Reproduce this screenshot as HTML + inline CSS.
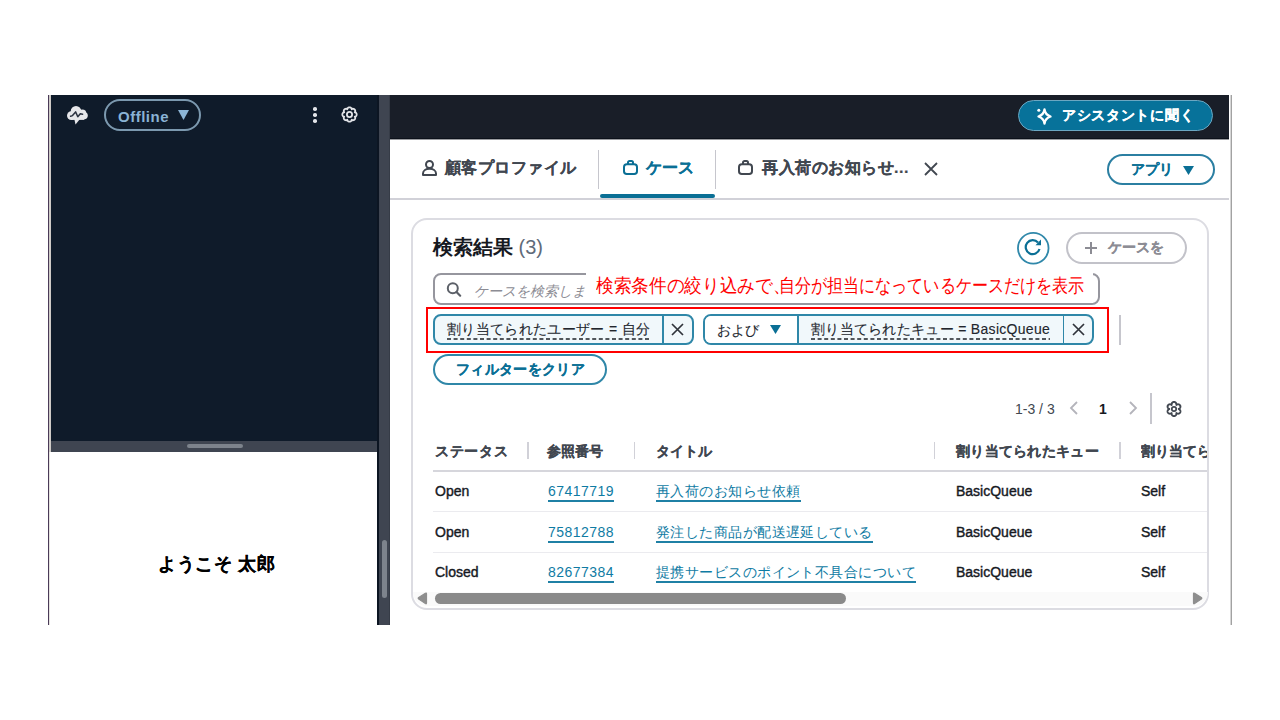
<!DOCTYPE html>
<html><head><meta charset="utf-8">
<style>
*{box-sizing:border-box;margin:0;padding:0}
html,body{width:1280px;height:720px;overflow:hidden;background:#fff}
body{position:relative;font-family:"Liberation Sans",sans-serif;color:#414750}
.a{position:absolute}
.t{position:absolute;white-space:nowrap;line-height:1}
svg{position:absolute;overflow:visible}
.lk{font-size:14px;color:#0f7ba3;border-bottom:2px solid #1f80a5;padding-bottom:1.5px;letter-spacing:0.45px}
</style></head><body>

<!-- left edge lines -->
<div class="a" style="left:48px;top:95px;width:1px;height:530px;background:#4a3b58"></div>
<div class="a" style="left:49px;top:95px;width:2px;height:357px;background:#cfcbc7"></div><div class="a" style="left:49px;top:452px;width:1px;height:173px;background:#e6e3e0"></div>

<!-- left CCP panel -->
<div class="a" style="left:51px;top:95px;width:327px;height:346px;background:#0f1b2a"></div>
<div class="a" style="left:51px;top:441px;width:327px;height:11px;background:#3f4551"></div>
<div class="a" style="left:187px;top:444px;width:56px;height:4px;border-radius:2px;background:#7d838c"></div>

<!-- cloud icon -->
<svg style="left:62px;top:102px" width="30" height="26" viewBox="0 0 30 26">
  <g fill="#e6e7ea">
  <circle cx="9.3" cy="13.6" r="4.3"/>
  <circle cx="14" cy="9.3" r="5.3"/>
  <circle cx="20.3" cy="11.4" r="4"/>
  <circle cx="22.2" cy="13.6" r="3.6"/>
  <rect x="9.3" y="11" width="13" height="6.9"/>
  <path d="M12.3 17 L18 17 L13.5 22.6 Z"/>
  </g>
  <path d="M8.6 14.2 L10.5 13.6 L13.6 9.9 L15.8 14.8 L18.3 11.8 L20.6 12.2" fill="none" stroke="#2a3240" stroke-width="1.5" stroke-linejoin="round" stroke-linecap="round"/>
</svg>

<!-- Offline button -->
<div class="a" style="left:104px;top:99px;width:97px;height:32px;border:2px solid #7c99af;border-radius:16px"></div>
<div class="t" style="left:118px;top:109px;font-size:15px;font-weight:bold;color:#8ab3d5;letter-spacing:0.5px">Offline</div>
<svg style="left:178px;top:110px" width="11" height="10" viewBox="0 0 11 10"><path d="M0 0 H11 L5.5 10 Z" fill="#8cb5d6"/></svg>

<!-- kebab + gear -->
<div class="a" style="left:313.2px;top:107.3px;width:3.6px;height:3.6px;border-radius:50%;background:#e3e5e9"></div>
<div class="a" style="left:313.2px;top:113.3px;width:3.6px;height:3.6px;border-radius:50%;background:#e3e5e9"></div>
<div class="a" style="left:313.2px;top:119.3px;width:3.6px;height:3.6px;border-radius:50%;background:#e3e5e9"></div>
<svg style="left:341px;top:106px" width="17" height="17" viewBox="0 0 17 17">
  <path d="M8.50 1.35 L8.73 1.36 L8.97 1.40 L9.19 1.45 L9.42 1.53 L9.63 1.63 L9.84 1.75 L10.04 1.90 L10.22 2.07 L10.39 2.27 L10.54 2.49 L10.66 2.77 L10.68 3.23 L11.03 2.92 L11.31 2.81 L11.57 2.75 L11.83 2.74 L12.08 2.75 L12.32 2.78 L12.56 2.84 L12.78 2.92 L12.99 3.02 L13.19 3.15 L13.38 3.29 L13.56 3.44 L13.71 3.62 L13.85 3.81 L13.98 4.01 L14.08 4.22 L14.16 4.44 L14.22 4.68 L14.25 4.92 L14.26 5.17 L14.25 5.43 L14.19 5.69 L14.08 5.97 L13.77 6.32 L14.23 6.34 L14.51 6.46 L14.73 6.61 L14.93 6.78 L15.10 6.96 L15.25 7.16 L15.37 7.37 L15.47 7.58 L15.55 7.81 L15.60 8.03 L15.64 8.27 L15.65 8.50 L15.64 8.73 L15.60 8.97 L15.55 9.19 L15.47 9.42 L15.37 9.63 L15.25 9.84 L15.10 10.04 L14.93 10.22 L14.73 10.39 L14.51 10.54 L14.23 10.66 L13.77 10.68 L14.08 11.03 L14.19 11.31 L14.25 11.57 L14.26 11.83 L14.25 12.08 L14.22 12.32 L14.16 12.56 L14.08 12.78 L13.98 12.99 L13.85 13.19 L13.71 13.38 L13.56 13.56 L13.38 13.71 L13.19 13.85 L12.99 13.98 L12.78 14.08 L12.56 14.16 L12.32 14.22 L12.08 14.25 L11.83 14.26 L11.57 14.25 L11.31 14.19 L11.03 14.08 L10.68 13.77 L10.66 14.23 L10.54 14.51 L10.39 14.73 L10.22 14.93 L10.04 15.10 L9.84 15.25 L9.63 15.37 L9.42 15.47 L9.19 15.55 L8.97 15.60 L8.73 15.64 L8.50 15.65 L8.27 15.64 L8.03 15.60 L7.81 15.55 L7.58 15.47 L7.37 15.37 L7.16 15.25 L6.96 15.10 L6.78 14.93 L6.61 14.73 L6.46 14.51 L6.34 14.23 L6.32 13.77 L5.97 14.08 L5.69 14.19 L5.43 14.25 L5.17 14.26 L4.92 14.25 L4.68 14.22 L4.44 14.16 L4.22 14.08 L4.01 13.98 L3.81 13.85 L3.62 13.71 L3.44 13.56 L3.29 13.38 L3.15 13.19 L3.02 12.99 L2.92 12.78 L2.84 12.56 L2.78 12.32 L2.75 12.08 L2.74 11.83 L2.75 11.57 L2.81 11.31 L2.92 11.03 L3.23 10.68 L2.77 10.66 L2.49 10.54 L2.27 10.39 L2.07 10.22 L1.90 10.04 L1.75 9.84 L1.63 9.63 L1.53 9.42 L1.45 9.19 L1.40 8.97 L1.36 8.73 L1.35 8.50 L1.36 8.27 L1.40 8.03 L1.45 7.81 L1.53 7.58 L1.63 7.37 L1.75 7.16 L1.90 6.96 L2.07 6.78 L2.27 6.61 L2.49 6.46 L2.77 6.34 L3.23 6.32 L2.92 5.97 L2.81 5.69 L2.75 5.43 L2.74 5.17 L2.75 4.92 L2.78 4.68 L2.84 4.44 L2.92 4.22 L3.02 4.01 L3.15 3.81 L3.29 3.62 L3.44 3.44 L3.62 3.29 L3.81 3.15 L4.01 3.02 L4.22 2.92 L4.44 2.84 L4.68 2.78 L4.92 2.75 L5.17 2.74 L5.43 2.75 L5.69 2.81 L5.97 2.92 L6.32 3.23 L6.34 2.77 L6.46 2.49 L6.61 2.27 L6.78 2.07 L6.96 1.90 L7.16 1.75 L7.37 1.63 L7.58 1.53 L7.81 1.45 L8.03 1.40 L8.27 1.36Z" fill="none" stroke="#e3e5e9" stroke-width="1.8" stroke-linejoin="round"/><circle cx="8.5" cy="8.5" r="2.6" fill="none" stroke="#e3e5e9" stroke-width="1.8"/>
</svg>

<!-- welcome -->
<div class="t" style="left:158px;top:555px;letter-spacing:0.6px;font-size:18px;font-weight:bold;color:#000;-webkit-text-stroke:0.2px #000">ようこそ 太郎</div>

<!-- gutter -->
<div class="a" style="left:377px;top:95px;width:2px;height:530px;background:#0c1522"></div><div class="a" style="left:379px;top:95px;width:11px;height:530px;background:#3f4551"></div><div class="a" style="left:389px;top:95px;width:1px;height:530px;background:#363c47"></div>
<div class="a" style="left:382px;top:540px;width:5px;height:58px;border-radius:3px;background:#7d838c"></div>

<!-- right header -->
<div class="a" style="left:390px;top:95px;width:839px;height:44px;background:#191e28;border-bottom:1px solid #0c111a"></div><div class="a" style="left:390px;top:139px;width:839px;height:1px;background:#9a9ca0"></div>
<div class="a" style="left:1230px;top:95px;width:1px;height:530px;background:#d6d6d6"></div><div class="a" style="left:1231px;top:95px;width:1px;height:530px;background:#a2a2a2"></div>

<!-- assistant button -->
<div class="a" style="left:1018px;top:100px;width:195px;height:31px;border-radius:16px;background:#07729a;border:1px solid #6ba7c2"></div>
<div class="t" style="left:1062px;top:108px;font-size:14px;font-weight:bold;color:#fff;letter-spacing:0.7px;-webkit-text-stroke:0.2px #fff">アシスタントに聞く</div>

<!-- tabs -->
<div class="t" style="left:445px;top:160px;font-size:16px;font-weight:bold;color:#414750;letter-spacing:0.45px;-webkit-text-stroke:0.2px #414750">顧客プロファイル</div>
<div class="a" style="left:598px;top:150px;width:1px;height:39px;background:#c6c6cd"></div>
<div class="t" style="left:646px;top:160px;font-size:16px;font-weight:bold;color:#0a6f95;-webkit-text-stroke:0.2px #0a6f95">ケース</div>
<div class="a" style="left:600px;top:194px;width:115px;height:4px;border-radius:2px;background:#0a6f95"></div>
<div class="a" style="left:715px;top:150px;width:1px;height:39px;background:#c6c6cd"></div>
<div class="t" style="left:762px;top:160px;font-size:16px;font-weight:bold;color:#414750;letter-spacing:0.5px;-webkit-text-stroke:0.2px #414750">再入荷のお知らせ...</div>
<div class="a" style="left:1107px;top:154px;width:108px;height:31px;border:2px solid #2b7fa2;border-radius:16px"></div>
<div class="t" style="left:1131px;top:162px;font-size:14px;font-weight:bold;color:#0a6f95;-webkit-text-stroke:0.2px #0a6f95">アプリ</div>
<svg style="left:1183px;top:166px" width="11" height="9" viewBox="0 0 11 9"><path d="M0 0 H11 L5.5 9 Z" fill="#0a6f95"/></svg>
<div class="a" style="left:390px;top:198px;width:839px;height:2px;background:#d1d1d8"></div>

<!-- card -->
<div class="a" style="left:410.5px;top:217.5px;width:798.5px;height:392px;border:2px solid #dcdce2;border-radius:16px"></div>
<div class="t" style="left:433px;top:237px;font-size:20px;font-weight:bold;color:#16191f;-webkit-text-stroke:0">検索結果 <span style="font-weight:normal;color:#5f6b7a;-webkit-text-stroke:0">(3)</span></div>


<!-- icons in tabs -->
<svg style="left:422px;top:160px" width="15" height="16" viewBox="0 0 15 16">
  <circle cx="7.5" cy="4.5" r="3.5" fill="none" stroke="#414750" stroke-width="2"/>
  <path d="M1 15 V13.5 C1 10.5 4 8.8 7.5 8.8 C11 8.8 14 10.5 14 13.5 V15 Z" fill="none" stroke="#414750" stroke-width="2" stroke-linejoin="round"/>
</svg>
<svg style="left:623px;top:160px" width="15" height="15" viewBox="0 0 15 15">
  <path d="M5 4 V2.5 C5 1.6 5.7 1 6.5 1 H8.5 C9.3 1 10 1.6 10 2.5 V4" fill="none" stroke="#0a6f95" stroke-width="2"/>
  <rect x="1" y="4.2" width="13" height="9.8" rx="2.8" fill="none" stroke="#0a6f95" stroke-width="2"/>
</svg>
<svg style="left:738px;top:160px" width="15" height="15" viewBox="0 0 15 15">
  <path d="M5 4 V2.5 C5 1.6 5.7 1 6.5 1 H8.5 C9.3 1 10 1.6 10 2.5 V4" fill="none" stroke="#414750" stroke-width="2"/>
  <rect x="1" y="4.2" width="13" height="9.8" rx="2.8" fill="none" stroke="#414750" stroke-width="2"/>
</svg>
<svg style="left:924px;top:162px" width="14" height="14" viewBox="0 0 14 14">
  <path d="M1 1 L13 13 M13 1 L1 13" stroke="#414750" stroke-width="1.8"/>
</svg>
<!-- sparkle -->
<svg style="left:1036px;top:108px" width="17" height="17" viewBox="0 0 17 17">
  <path d="M8.5 1.5 C9 5.5 10.5 7 14.5 8.5 C10.5 10 9 11.5 8.5 15.5 C8 11.5 6.5 10 2.5 8.5 C6.5 7 8 5.5 8.5 1.5 Z" fill="none" stroke="#fff" stroke-width="2.3" stroke-linejoin="round"/>
  <circle cx="2.8" cy="2.2" r="1.5" fill="#fff"/>
</svg>

<!-- refresh -->
<svg style="left:1017px;top:231.5px" width="33" height="33" viewBox="0 0 33 33"><circle cx="16.25" cy="16.25" r="15.3" fill="none" stroke="#3088aa" stroke-width="1.8"/></svg>
<svg style="left:1024px;top:238px" width="18" height="18" viewBox="0 0 18 18">
  <path d="M15.5 11 A7 7 0 1 1 14 4.5" fill="none" stroke="#0a6f95" stroke-width="2.2"/>
  <path d="M17 1.5 V7.2 H11.5 Z" fill="#0a6f95"/>
</svg>
<!-- + case -->
<div class="a" style="left:1066px;top:231.5px;width:121px;height:32.5px;border:2px solid #c2c2c9;border-radius:17px"></div>
<svg style="left:1085px;top:242px" width="12" height="12" viewBox="0 0 12 12"><path d="M6 0 V12 M0 6 H12" stroke="#8c8c94" stroke-width="2"/></svg>
<div class="t" style="left:1108px;top:240px;font-size:14px;font-weight:bold;color:#8c8c94;-webkit-text-stroke:0.2px #8c8c94">ケースを</div>

<!-- search input -->
<div class="a" style="left:433px;top:273px;width:667px;height:32px;border:2px solid #96969e;border-radius:8px"></div>
<svg style="left:446px;top:282px" width="16" height="16" viewBox="0 0 16 16">
  <circle cx="6.8" cy="6.3" r="5" fill="none" stroke="#5c6068" stroke-width="2"/>
  <path d="M10.5 10 L14.2 13.7" stroke="#5c6068" stroke-width="2.2" stroke-linecap="round"/>
</svg>
<div class="t" style="left:474px;top:284px;font-size:14px;font-style:italic;color:#8c8c94">ケースを検索しま</div>
<!-- annotation -->
<div class="a" style="left:586px;top:272px;width:507px;height:31px;background:#fff"></div>
<div class="t" style="left:596px;top:276.5px;font-size:18.5px;color:#ff0000;transform:scaleX(0.93);transform-origin:0 0">検索条件の絞り込みで、</div><div class="t" style="left:779px;top:276.5px;font-size:18.5px;color:#ff0000;transform:scaleX(0.845);transform-origin:0 0">自分が担当になっているケースだけを表示</div>

<!-- tokens -->
<div class="a" style="left:433px;top:314px;width:261px;height:31px;border:2px solid #2f87a8;border-radius:8px;background:#f1f8fb"></div>
<div class="a" style="left:662px;top:314px;width:1.5px;height:31px;background:#2f87a8"></div>
<div class="t" style="left:447px;top:322px;font-size:14px;color:#22262d;-webkit-text-stroke:0.12px #22262d;letter-spacing:0.35px">割り当てられたユーザー = 自分</div>
<svg style="left:671px;top:323px" width="13" height="13" viewBox="0 0 13 13"><path d="M1 1 L12 12 M12 1 L1 12" stroke="#30343b" stroke-width="1.7"/></svg>

<div class="a" style="left:703px;top:314px;width:391px;height:31px;border:2px solid #2f87a8;border-radius:8px;background:#f1f8fb"></div>
<div class="a" style="left:705px;top:316px;width:92px;height:27px;border-radius:6px 0 0 6px;background:#fff"></div>
<div class="a" style="left:797px;top:314px;width:1.5px;height:31px;background:#2f87a8"></div>
<div class="a" style="left:1062.5px;top:314px;width:1.5px;height:31px;background:#2f87a8"></div>
<div class="t" style="left:717px;top:323px;font-size:14px;color:#22262d;-webkit-text-stroke:0.12px #22262d">および</div>
<svg style="left:770px;top:325px" width="11" height="9" viewBox="0 0 11 9"><path d="M0 0 H11 L5.5 9 Z" fill="#0a6f95"/></svg>
<div class="t" style="left:811px;top:322px;font-size:14px;color:#22262d;-webkit-text-stroke:0.12px #22262d;letter-spacing:0.3px">割り当てられたキュー = BasicQueue</div>
<svg style="left:1072px;top:323px" width="13" height="13" viewBox="0 0 13 13"><path d="M1 1 L12 12 M12 1 L1 12" stroke="#30343b" stroke-width="1.7"/></svg>
<div class="a" style="left:1119px;top:315px;width:1.5px;height:30px;background:#c6c6cd"></div>


<svg style="left:447px;top:338px" width="203" height="2"><line x1="0" y1="1" x2="203" y2="1" stroke="#1d2027" stroke-width="1.7" stroke-dasharray="4 2.6"/></svg>
<svg style="left:811px;top:338px" width="239" height="2"><line x1="0" y1="1" x2="239" y2="1" stroke="#1d2027" stroke-width="1.7" stroke-dasharray="4 2.6"/></svg>
<!-- red rect -->
<div class="a" style="left:426px;top:307px;width:683px;height:46px;border:2px solid #ff0000"></div>

<!-- clear filter -->
<div class="a" style="left:433px;top:353.5px;width:174px;height:31.5px;border:2px solid #2f87a8;border-radius:16px"></div>
<div class="t" style="left:456px;top:362px;font-size:14px;letter-spacing:0.35px;font-weight:bold;color:#0a6f95;-webkit-text-stroke:0.2px #0a6f95">フィルターをクリア</div>

<!-- pagination -->
<div class="t" style="left:1015px;top:402px;font-size:14px;color:#414750">1-3 / 3</div>
<svg style="left:1069px;top:401px" width="10" height="14" viewBox="0 0 10 14"><path d="M8 1 L2 7 L8 13" fill="none" stroke="#b4b4bb" stroke-width="1.8"/></svg>
<div class="t" style="left:1099px;top:402px;font-size:14px;font-weight:bold;color:#16191f">1</div>
<svg style="left:1128px;top:401px" width="10" height="14" viewBox="0 0 10 14"><path d="M2 1 L8 7 L2 13" fill="none" stroke="#b4b4bb" stroke-width="1.8"/></svg>
<div class="a" style="left:1150px;top:393px;width:1.5px;height:31px;background:#c6c6cd"></div>
<svg style="left:1165.5px;top:400.5px" width="16" height="16" viewBox="0 0 16 16"><path d="M8.00 0.90 L8.23 0.91 L8.46 0.95 L8.69 1.01 L8.91 1.10 L9.12 1.21 L9.32 1.34 L9.52 1.50 L9.70 1.67 L9.86 1.87 L10.01 2.09 L10.14 2.32 L10.25 2.58 L10.33 2.85 L10.39 3.15 L10.41 3.48 L10.35 3.93 L10.70 3.65 L11.00 3.51 L11.29 3.41 L11.57 3.34 L11.85 3.31 L12.12 3.31 L12.38 3.32 L12.63 3.37 L12.87 3.43 L13.10 3.52 L13.32 3.63 L13.52 3.76 L13.71 3.91 L13.87 4.07 L14.02 4.26 L14.15 4.45 L14.25 4.66 L14.34 4.88 L14.40 5.10 L14.43 5.34 L14.44 5.58 L14.43 5.82 L14.39 6.06 L14.33 6.30 L14.24 6.55 L14.12 6.78 L13.98 7.01 L13.82 7.23 L13.62 7.45 L13.39 7.65 L13.12 7.83 L12.70 8.00 L13.12 8.17 L13.39 8.35 L13.62 8.55 L13.82 8.77 L13.98 8.99 L14.12 9.22 L14.24 9.45 L14.33 9.70 L14.39 9.94 L14.43 10.18 L14.44 10.42 L14.43 10.66 L14.40 10.90 L14.34 11.12 L14.25 11.34 L14.15 11.55 L14.02 11.74 L13.87 11.93 L13.71 12.09 L13.52 12.24 L13.32 12.37 L13.10 12.48 L12.87 12.57 L12.63 12.63 L12.38 12.68 L12.12 12.69 L11.85 12.69 L11.57 12.66 L11.29 12.59 L11.00 12.49 L10.70 12.35 L10.35 12.07 L10.41 12.52 L10.39 12.85 L10.33 13.15 L10.25 13.42 L10.14 13.68 L10.01 13.91 L9.86 14.13 L9.70 14.33 L9.52 14.50 L9.32 14.66 L9.12 14.79 L8.91 14.90 L8.69 14.99 L8.46 15.05 L8.23 15.09 L8.00 15.10 L7.77 15.09 L7.54 15.05 L7.31 14.99 L7.09 14.90 L6.88 14.79 L6.68 14.66 L6.48 14.50 L6.30 14.33 L6.14 14.13 L5.99 13.91 L5.86 13.68 L5.75 13.42 L5.67 13.15 L5.61 12.85 L5.59 12.52 L5.65 12.07 L5.30 12.35 L5.00 12.49 L4.71 12.59 L4.43 12.66 L4.15 12.69 L3.88 12.69 L3.62 12.68 L3.37 12.63 L3.13 12.57 L2.90 12.48 L2.68 12.37 L2.48 12.24 L2.29 12.09 L2.13 11.93 L1.98 11.74 L1.85 11.55 L1.75 11.34 L1.66 11.12 L1.60 10.90 L1.57 10.66 L1.56 10.42 L1.57 10.18 L1.61 9.94 L1.67 9.70 L1.76 9.45 L1.88 9.22 L2.02 8.99 L2.18 8.77 L2.38 8.55 L2.61 8.35 L2.88 8.17 L3.30 8.00 L2.88 7.83 L2.61 7.65 L2.38 7.45 L2.18 7.23 L2.02 7.01 L1.88 6.78 L1.76 6.55 L1.67 6.30 L1.61 6.06 L1.57 5.82 L1.56 5.58 L1.57 5.34 L1.60 5.10 L1.66 4.88 L1.75 4.66 L1.85 4.45 L1.98 4.26 L2.13 4.07 L2.29 3.91 L2.48 3.76 L2.68 3.63 L2.90 3.52 L3.13 3.43 L3.37 3.37 L3.62 3.32 L3.88 3.31 L4.15 3.31 L4.43 3.34 L4.71 3.41 L5.00 3.51 L5.30 3.65 L5.65 3.93 L5.59 3.48 L5.61 3.15 L5.67 2.85 L5.75 2.58 L5.86 2.32 L5.99 2.09 L6.14 1.87 L6.30 1.67 L6.48 1.50 L6.68 1.34 L6.88 1.21 L7.09 1.10 L7.31 1.01 L7.54 0.95 L7.77 0.91Z" fill="none" stroke="#414750" stroke-width="1.9" stroke-linejoin="round"/><circle cx="8" cy="8" r="2.2" fill="none" stroke="#414750" stroke-width="1.7"/></svg>

<!-- table header -->
<div class="t" style="left:435px;top:444px;font-size:14px;font-weight:bold;color:#414750;letter-spacing:0.7px;-webkit-text-stroke:0.2px #414750">ステータス</div>
<div class="a" style="left:527px;top:442px;width:1.5px;height:17px;background:#d1d1d8"></div>
<div class="t" style="left:547px;top:444px;font-size:14px;font-weight:bold;color:#414750;-webkit-text-stroke:0.2px #414750">参照番号</div>
<div class="a" style="left:633.5px;top:442px;width:1.5px;height:17px;background:#d1d1d8"></div>
<div class="t" style="left:656px;top:444px;font-size:14px;font-weight:bold;color:#414750;-webkit-text-stroke:0.2px #414750">タイトル</div>
<div class="a" style="left:933.5px;top:442px;width:1.5px;height:17px;background:#d1d1d8"></div>
<div class="t" style="left:956px;top:444px;font-size:14px;font-weight:bold;color:#414750;letter-spacing:0.3px;-webkit-text-stroke:0.2px #414750">割り当てられたキュー</div>
<div class="a" style="left:1119px;top:442px;width:1.5px;height:17px;background:#d1d1d8"></div>
<div class="a" style="left:1141px;top:440px;width:66px;height:24px;overflow:hidden"><div class="t" style="left:0;top:4px;font-size:14px;font-weight:bold;color:#414750;-webkit-text-stroke:0.2px #414750">割り当てられたユーザー</div></div>
<div class="a" style="left:433px;top:470px;width:774px;height:2px;background:#d6d6dc"></div>
<div class="a" style="left:433px;top:510.5px;width:774px;height:1.5px;background:#ebebef"></div>
<div class="a" style="left:433px;top:551.5px;width:774px;height:1.5px;background:#ebebef"></div>

<!-- rows -->
<div class="t" style="left:435px;top:484px;font-size:14px;color:#16191f;-webkit-text-stroke:0.4px #16191f">Open</div>
<div class="t lk" style="left:548px;top:484px">67417719</div>
<div class="t lk" style="left:656px;top:484px">再入荷のお知らせ依頼</div>
<div class="t" style="left:956px;top:484px;font-size:14px;color:#16191f;-webkit-text-stroke:0.4px #16191f">BasicQueue</div>
<div class="t" style="left:1141px;top:484px;font-size:14px;color:#16191f;-webkit-text-stroke:0.4px #16191f">Self</div>

<div class="t" style="left:435px;top:525px;font-size:14px;color:#16191f;-webkit-text-stroke:0.4px #16191f">Open</div>
<div class="t lk" style="left:548px;top:525px">75812788</div>
<div class="t lk" style="left:656px;top:525px">発注した商品が配送遅延している</div>
<div class="t" style="left:956px;top:525px;font-size:14px;color:#16191f;-webkit-text-stroke:0.4px #16191f">BasicQueue</div>
<div class="t" style="left:1141px;top:525px;font-size:14px;color:#16191f;-webkit-text-stroke:0.4px #16191f">Self</div>

<div class="t" style="left:435px;top:565px;font-size:14px;color:#16191f;-webkit-text-stroke:0.4px #16191f">Closed</div>
<div class="t lk" style="left:548px;top:565px">82677384</div>
<div class="t lk" style="left:656px;top:565px">提携サービスのポイント不具合について</div>
<div class="t" style="left:956px;top:565px;font-size:14px;color:#16191f;-webkit-text-stroke:0.4px #16191f">BasicQueue</div>
<div class="t" style="left:1141px;top:565px;font-size:14px;color:#16191f;-webkit-text-stroke:0.4px #16191f">Self</div>

<!-- h scrollbar -->
<div class="a" style="left:413px;top:592px;width:795px;height:14px;background:#fafafa;border-radius:0 0 14px 14px"></div>
<svg style="left:417px;top:592px" width="11" height="13" viewBox="0 0 11 13"><path d="M9.5 1.8 Q9.5 0.6 8.4 1.2 L1.7 5.6 Q0.7 6.3 1.7 7 L8.4 11.6 Q9.5 12.3 9.5 11 Z" fill="#8e8e8e" stroke="#8e8e8e" stroke-width="1.2" stroke-linejoin="round"/></svg>
<div class="a" style="left:435px;top:593px;width:411px;height:11px;border-radius:6px;background:#8a8a8a"></div>
<svg style="left:1192px;top:592px" width="11" height="13" viewBox="0 0 11 13"><path d="M1.5 1.8 Q1.5 0.6 2.6 1.2 L9.3 5.6 Q10.3 6.3 9.3 7 L2.6 11.6 Q1.5 12.3 1.5 11 Z" fill="#8e8e8e" stroke="#8e8e8e" stroke-width="1.2" stroke-linejoin="round"/></svg>

</body></html>
